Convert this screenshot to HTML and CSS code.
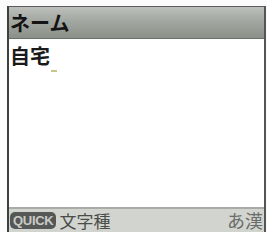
FILE: index.html
```html
<!DOCTYPE html>
<html lang="ja">
<head>
<meta charset="utf-8">
<link rel="stylesheet" href="styles.css">
</head>
<body>
<div class="screen">
  <div class="header">ネーム</div>
  <div class="content">
    <div class="line">自宅<span class="cursor"></span></div>
  </div>
  <div class="footer">
    <div class="left">
      <span class="quick">QUICK</span>
      <span class="mode">文字種</span>
    </div>
    <span class="input">あ漢</span>
  </div>
</div>
</body>
</html>
```
FILE: styles.css
```css
html, body {
  margin: 0;
  padding: 0;
  background: #fbfbfb;
  width: 267px;
  height: 232px;
  overflow: hidden;
}
.screen {
  margin: 6px 0 0 7px;
  width: 255px;
  height: 225px;
  border-left: 2px solid #3e3e3e;
  border-right: 2px solid #555;
  border-top: 1px solid #5a5a5a;
  display: flex;
  flex-direction: column;
  font-family: "Noto Sans CJK JP", "Noto Sans", sans-serif;
}
.header {
  height: 31px;
  background: linear-gradient(#bcbfba, #a3a7a1 45%, #8b9089);
  border-bottom: 1px solid #6d716b;
  color: #141414;
  font-size: 20px;
  font-weight: bold;
  line-height: 31px;
  padding-left: 1px;
}
.content {
  flex: 1;
  background: #fff;
  padding: 4px 0 0 1px;
}
.line {
  font-size: 20px;
  font-weight: bold;
  line-height: 25px;
  color: #1a1a1a;
}
.cursor {
  display: inline-block;
  width: 6px;
  height: 2px;
  background: #c8c48a;
  vertical-align: -8px;
  margin-left: 1px;
}
.footer {
  height: 23px;
  background: #d2d4cf;
  border-top: 2px solid #a9aba6;
  display: flex;
  align-items: center;
  justify-content: space-between;
  padding: 0 1px 0 1px;
}
.left {
  display: flex;
  align-items: center;
  gap: 3px;
}
.quick {
  background: #555856;
  color: #c9cbc7;
  font-family: "Liberation Sans", sans-serif;
  font-weight: bold;
  font-size: 13px;
  border-radius: 5px;
  padding: 1px 3px;
  line-height: 15px;
  letter-spacing: -0.3px;
}
.mode {
  font-size: 17px;
  color: #4a4c49;
  line-height: 21px;
}
.input {
  font-size: 18px;
  color: #6a6c69;
  line-height: 21px;
}
```
